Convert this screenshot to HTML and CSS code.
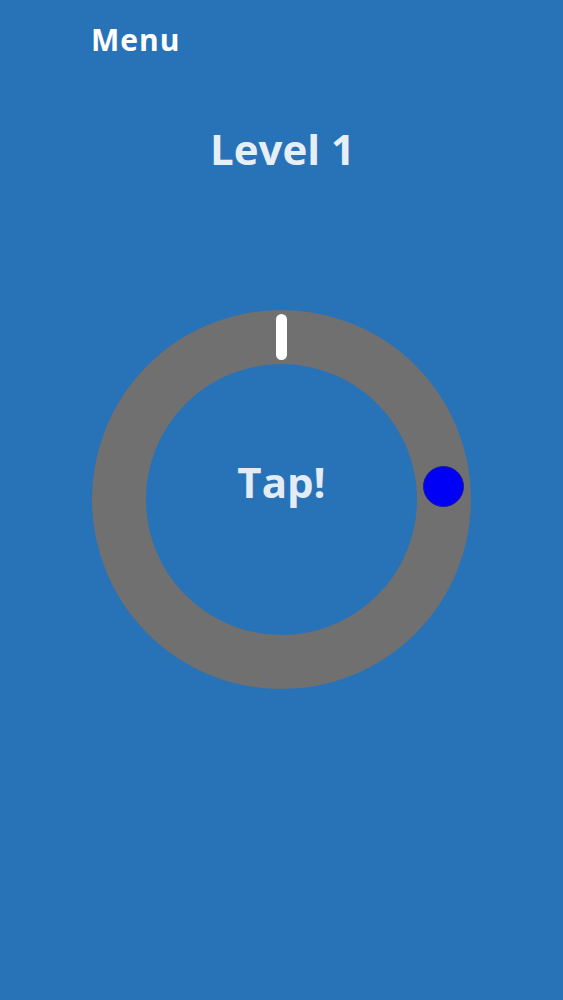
FILE: index.html
```html
<!DOCTYPE html>
<html>
<head>
<meta charset="utf-8">
<link rel="stylesheet" href="styles.css">
</head>
<body>
<div class="screen">
  <header class="top-bar"><span class="menu">Menu</span></header>
  <h1 class="level">Level 1</h1>
  <div class="ring-wrap">
    <div class="ring">
      <div class="marker"></div>
      <div class="ball"></div>
      <span class="tap">Tap!</span>
    </div>
  </div>
</div>
</body>
</html>
```
FILE: styles.css
```css
html, body {
  margin: 0;
  padding: 0;
}
body {
  background: #2872b8;
  font-family: "Open Sans", Lato, "Liberation Sans", sans-serif;
}
.screen {
  width: 563px;
  height: 1000px;
  display: flex;
  flex-direction: column;
}
.top-bar {
  padding: 25px 0 0 91px;
  line-height: 1;
}
.menu {
  color: #ffffff;
  font-size: 30px;
  font-weight: 700;
  line-height: 30px;
  letter-spacing: 1px;
}
.level {
  margin: 73px 0 0;
  text-align: center;
  color: #e6eef6;
  font-size: 42px;
  font-weight: 700;
  line-height: 42px;
  padding-left: 2px;
}
.ring-wrap {
  margin-top: 140px;
  display: flex;
  justify-content: center;
}
.ring {
  position: relative;
  width: 379px;
  height: 379px;
  box-sizing: border-box;
  border: 54px solid #707070;
  border-radius: 50%;
  display: flex;
  align-items: center;
  justify-content: center;
}
.tap {
  color: #e3ebf4;
  font-size: 42px;
  font-weight: 700;
  line-height: 42px;
  margin-bottom: 36px;
}
.marker {
  position: absolute;
  left: 130px;
  top: -50px;
  width: 11px;
  height: 46px;
  border-radius: 6px;
  background: #ffffff;
}
.ball {
  position: absolute;
  left: 277px;
  top: 102px;
  width: 41px;
  height: 41px;
  box-sizing: border-box;
  border-radius: 50%;
  background: #0000f6;
  border: 1px solid #1c1c8c;
}
```
